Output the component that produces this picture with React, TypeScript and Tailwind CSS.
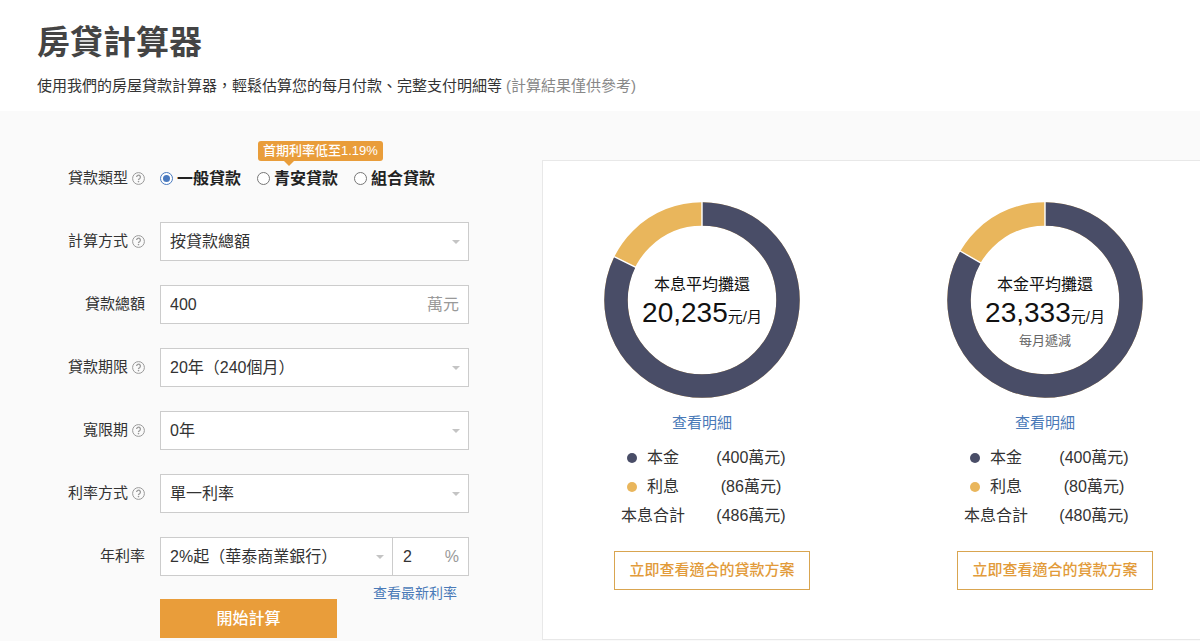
import { useState } from "react";
import type { ReactNode } from "react";

interface FieldRowProps {
  label: string;
  htmlFor?: string;
  help?: boolean;
  children: ReactNode;
}

interface SelectFieldProps {
  id: string;
  options: string[];
}

interface Plan {
  title: string;
  monthly: string;
  note?: string;
  principal: number;
  interest: number;
}

const loanTypes = ["一般貸款", "青安貸款", "組合貸款"];

const plans: Plan[] = [
  { title: "本息平均攤還", monthly: "20,235", principal: 400, interest: 86 },
  {
    title: "本金平均攤還",
    monthly: "23,333",
    note: "每月遞減",
    principal: 400,
    interest: 80,
  },
];

const HelpIcon = () => (
  <svg viewBox="0 0 13 13" className="size-[13px]" fill="none" stroke="#999">
    <circle cx="6.5" cy="6.5" r="5.9" strokeWidth="1" />
    <path
      d="M4.6 5.1a1.9 1.9 0 1 1 2.9 1.6c-.7.4-1 .7-1 1.4"
      strokeWidth="1.3"
    />
    <circle cx="6.5" cy="9.6" r="0.8" fill="#999" stroke="none" />
  </svg>
);

const FieldRow = ({ label, htmlFor, help, children }: FieldRowProps) => (
  <div className="flex h-[39px] items-center gap-[15px]">
    <div className="flex w-[108px] shrink-0 items-center justify-end gap-1 text-[15px]">
      {htmlFor ? <label htmlFor={htmlFor}>{label}</label> : <span>{label}</span>}
      {help && (
        <button type="button" aria-label={`${label}說明`}>
          <HelpIcon />
        </button>
      )}
    </div>
    {children}
  </div>
);

const SelectField = ({ id, options }: SelectFieldProps) => (
  <div className="relative h-full flex-1">
    <select
      id={id}
      className="h-full w-full appearance-none border border-[#ccc] bg-white pr-6 pl-[9px] text-base outline-none"
    >
      {options.map((option) => (
        <option key={option}>{option}</option>
      ))}
    </select>
    <svg
      viewBox="0 0 8 4"
      className="pointer-events-none absolute top-[18px] right-[9px] h-1 w-2 fill-[#c4c4c4]"
    >
      <path d="M0 0h8L4 4z" />
    </svg>
  </div>
);

const Donut = ({ principal, interest }: Pick<Plan, "principal" | "interest">) => {
  const share = principal / (principal + interest);
  const angle = share * 2 * Math.PI;

  return (
    <svg viewBox="0 0 196 196" className="size-[196px]" fill="none">
      <circle cx="98" cy="98" r="86" stroke="#e9b65c" strokeWidth="23.5" />
      <circle
        cx="98"
        cy="98"
        r="86"
        stroke="#494d67"
        strokeWidth="23.5"
        pathLength={100}
        strokeDasharray={`${share * 100} 100`}
        transform="rotate(-90 98 98)"
      />
      <path
        d={`M98 98V0M98 98L${98 + 98 * Math.sin(angle)} ${98 - 98 * Math.cos(angle)}`}
        stroke="#fff"
        strokeWidth="1.4"
      />
    </svg>
  );
};

const PlanColumn = ({ title, monthly, note, principal, interest }: Plan) => (
  <section className="flex flex-col items-center">
    <div className="relative">
      <Donut principal={principal} interest={interest} />
      <div className="absolute inset-0 flex flex-col items-center pt-[71px] text-[#111]">
        <h2 className="text-base leading-6">{title}</h2>
        <p className="text-[15px] leading-8 whitespace-nowrap">
          <span className="text-[28px]">{monthly}</span>元/月
        </p>
        {note && <p className="text-[13px] leading-4 text-[#666]">{note}</p>}
      </div>
    </div>
    <a href="#detail" className="mt-[15px] text-[15px] leading-5 text-[#4a7ab8]">
      查看明細
    </a>
    <table className="mt-[10px] w-[196px] table-fixed text-center text-base leading-[29px] whitespace-nowrap">
      <tbody>
        <tr>
          <th scope="row" className="font-normal">
            <span className="flex items-center justify-center gap-[10px]">
              <span className="size-[10px] rounded-full bg-[#494d67]" />
              本金
            </span>
          </th>
          <td>({principal}萬元)</td>
        </tr>
        <tr>
          <th scope="row" className="font-normal">
            <span className="flex items-center justify-center gap-[10px]">
              <span className="size-[10px] rounded-full bg-[#e9b65c]" />
              利息
            </span>
          </th>
          <td>({interest}萬元)</td>
        </tr>
        <tr>
          <th scope="row" className="font-normal">
            本息合計
          </th>
          <td>({principal + interest}萬元)</td>
        </tr>
      </tbody>
    </table>
    <button
      type="button"
      className="mt-[21px] ml-5 h-[39px] w-[196px] border border-[#d9a550] text-[15px] font-medium text-[#e29b3a]"
    >
      立即查看適合的貸款方案
    </button>
  </section>
);

const App = () => {
  const [loanType, setLoanType] = useState(loanTypes[0]);
  const [amount, setAmount] = useState("400");
  const [rate, setRate] = useState("2");

  return (
    <div className="min-h-screen bg-[#fafafa] font-['Liberation_Sans','Noto_Sans_CJK_TC',sans-serif] text-[#333]">
      <header className="bg-white px-[37px] pt-[21px] pb-[15px]">
        <h1 className="text-[33px] leading-[44px] font-bold text-[#444]">
          房貸計算器
        </h1>
        <p className="mt-[11px] text-[15px] leading-5">
          使用我們的房屋貸款計算器，輕鬆估算您的每月付款、完整支付明細等
          <span className="ml-1 text-[#888]">(計算結果僅供參考)</span>
        </p>
      </header>

      <main className="flex items-start gap-[73px] pt-12 pl-[37px]">
        <form
          className="flex w-[432px] shrink-0 flex-col gap-6"
          onSubmit={(e) => e.preventDefault()}
        >
          <FieldRow label="貸款類型" help>
            <div className="relative flex gap-4">
              {loanTypes.map((type) => (
                <label
                  key={type}
                  className="flex items-center gap-1 text-base font-bold text-[#222]"
                >
                  <input
                    type="radio"
                    name="loanType"
                    checked={loanType === type}
                    onChange={() => setLoanType(type)}
                    className="grid size-[13px] appearance-none place-items-center rounded-full border border-[#777] bg-white checked:border-[#4a7abf] checked:before:size-[7px] checked:before:rounded-full checked:before:bg-[#4a7abf]"
                  />
                  {type}
                </label>
              ))}
              <div className="absolute bottom-full left-[98px] mb-[6px] flex h-5 items-center rounded-[3px] bg-[#e99d3a] px-[5px] text-[13px] font-medium whitespace-nowrap text-white">
                首期利率低至1.19%
                <svg
                  viewBox="0 0 10 5"
                  className="absolute top-full left-[26px] h-[5px] w-[10px] fill-[#e99d3a]"
                >
                  <path d="M0 0h10L5 5z" />
                </svg>
              </div>
            </div>
          </FieldRow>

          <FieldRow label="計算方式" htmlFor="method" help>
            <SelectField id="method" options={["按貸款總額", "按房屋總價"]} />
          </FieldRow>

          <FieldRow label="貸款總額" htmlFor="amount">
            <div className="flex h-full flex-1 items-center border border-[#ccc] bg-white px-[9px] text-base">
              <input
                id="amount"
                value={amount}
                onChange={(e) => setAmount(e.target.value)}
                className="w-full min-w-0 outline-none"
              />
              <span className="shrink-0 text-[#999]">萬元</span>
            </div>
          </FieldRow>

          <FieldRow label="貸款期限" htmlFor="term" help>
            <SelectField
              id="term"
              options={["20年（240個月）", "30年（360個月）"]}
            />
          </FieldRow>

          <FieldRow label="寬限期" htmlFor="grace" help>
            <SelectField id="grace" options={["0年", "1年", "2年", "3年"]} />
          </FieldRow>

          <FieldRow label="利率方式" htmlFor="rateType" help>
            <SelectField id="rateType" options={["單一利率", "分段利率"]} />
          </FieldRow>

          <div>
            <FieldRow label="年利率" htmlFor="bank">
              <div className="flex h-full flex-1">
                <SelectField id="bank" options={["2%起（華泰商業銀行）"]} />
                <div className="flex w-[76px] items-center border border-l-0 border-[#ccc] bg-white pr-[9px] pl-[10px] text-base">
                  <input
                    aria-label="年利率百分比"
                    value={rate}
                    onChange={(e) => setRate(e.target.value)}
                    className="w-full min-w-0 outline-none"
                  />
                  <span className="text-[#999]">%</span>
                </div>
              </div>
            </FieldRow>
            <div className="flex items-start justify-between pt-[7px] pr-3 pl-[123px]">
              <button
                type="submit"
                className="mt-4 h-[39px] w-[177px] bg-[#e99d3a] text-base font-medium text-white"
              >
                開始計算
              </button>
              <a href="#rates" className="text-sm leading-5 text-[#4a7ab8]">
                查看最新利率
              </a>
            </div>
          </div>
        </form>

        <div className="mt-px grid min-h-[480px] flex-1 grid-cols-2 gap-x-[33px] border border-r-0 border-[#e8e8e8] bg-white pt-[41px] pl-1">
          {plans.map((plan) => (
            <PlanColumn key={plan.title} {...plan} />
          ))}
        </div>
      </main>
    </div>
  );
};

export default App;
